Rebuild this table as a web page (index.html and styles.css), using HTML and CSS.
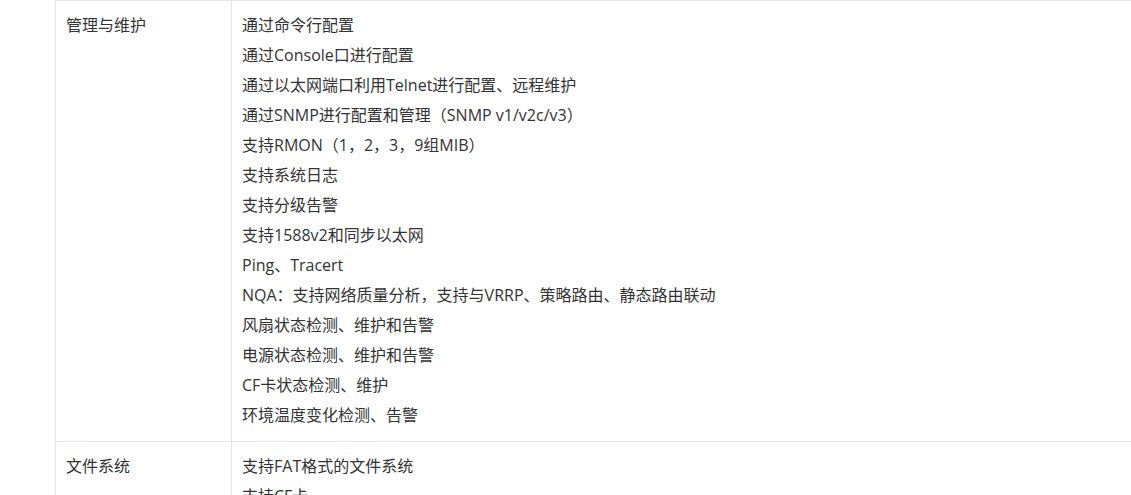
FILE: index.html
```html
<!DOCTYPE html>
<html lang="zh-CN">
<head>
<meta charset="utf-8">
<title>规格</title>
<link rel="stylesheet" href="styles.css">
</head>
<body>
<table class="spec">
  <tbody>
    <tr>
      <td class="name">管理与维护</td>
      <td class="value">
        <p>通过命令行配置</p>
        <p>通过Console口进行配置</p>
        <p>通过以太网端口利用Telnet进行配置、远程维护</p>
        <p>通过SNMP进行配置和管理（SNMP v1/v2c/v3）</p>
        <p>支持RMON（1，2，3，9组MIB）</p>
        <p>支持系统日志</p>
        <p>支持分级告警</p>
        <p>支持1588v2和同步以太网</p>
        <p>Ping、Tracert</p>
        <p>NQA：支持网络质量分析，支持与VRRP、策略路由、静态路由联动</p>
        <p>风扇状态检测、维护和告警</p>
        <p>电源状态检测、维护和告警</p>
        <p>CF卡状态检测、维护</p>
        <p>环境温度变化检测、告警</p>
      </td>
    </tr>
    <tr>
      <td class="name">文件系统</td>
      <td class="value">
        <p>支持FAT格式的文件系统</p>
        <p>支持CF卡</p>
      </td>
    </tr>
  </tbody>
</table>
</body>
</html>
```

FILE: styles.css
```css
html, body {
  margin: 0;
  padding: 0;
  background: #fff;
  overflow: hidden;
}

body {
  font-family: "Open Sans", "Noto Sans CJK SC", sans-serif;
  font-size: 16px;
  color: #333;
}

.spec {
  border-collapse: collapse;
  margin-left: 55px;
  width: 1120px;
}

.spec td {
  border: 1px solid #e5e5e5;
  padding: 9px 10px 11px;
  vertical-align: top;
  line-height: 30px;
}

.spec .name {
  width: 155px;
}

.spec p {
  margin: 0;
  white-space: nowrap;
}
```
